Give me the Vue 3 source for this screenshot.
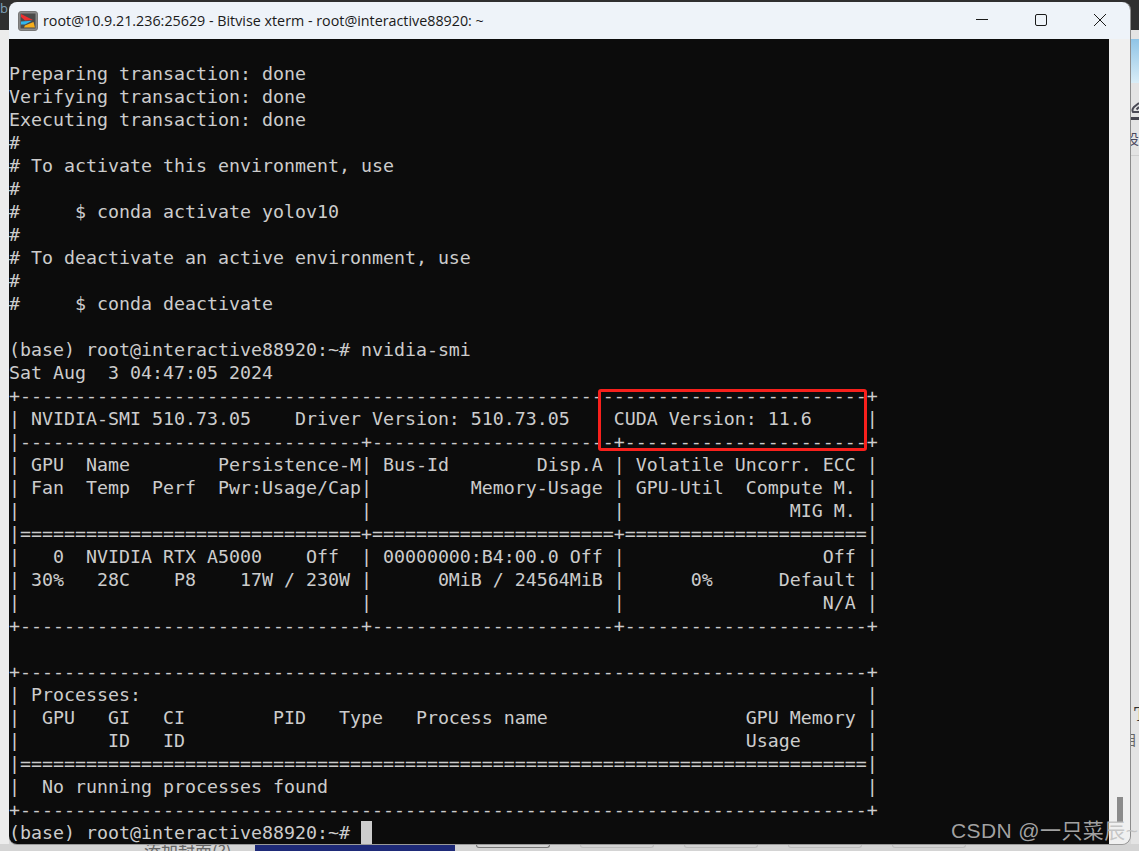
<script setup>
const lines = [
  '',
  'Preparing transaction: done',
  'Verifying transaction: done',
  'Executing transaction: done',
  '#',
  '# To activate this environment, use',
  '#',
  '#     $ conda activate yolov10',
  '#',
  '# To deactivate an active environment, use',
  '#',
  '#     $ conda deactivate',
  '',
  '(base) root@interactive88920:~# nvidia-smi',
  'Sat Aug  3 04:47:05 2024',
  '+-----------------------------------------------------------------------------+',
  '| NVIDIA-SMI 510.73.05    Driver Version: 510.73.05    CUDA Version: 11.6     |',
  '|-------------------------------+----------------------+----------------------+',
  '| GPU  Name        Persistence-M| Bus-Id        Disp.A | Volatile Uncorr. ECC |',
  '| Fan  Temp  Perf  Pwr:Usage/Cap|         Memory-Usage | GPU-Util  Compute M. |',
  '|                               |                      |               MIG M. |',
  '|===============================+======================+======================|',
  '|   0  NVIDIA RTX A5000    Off  | 00000000:B4:00.0 Off |                  Off |',
  '| 30%   28C    P8    17W / 230W |      0MiB / 24564MiB |      0%      Default |',
  '|                               |                      |                  N/A |',
  '+-------------------------------+----------------------+----------------------+',
  '',
  '+-----------------------------------------------------------------------------+',
  '| Processes:                                                                  |',
  '|  GPU   GI   CI        PID   Type   Process name                  GPU Memory |',
  '|        ID   ID                                                   Usage      |',
  '|=============================================================================|',
  '|  No running processes found                                                 |',
  '+-----------------------------------------------------------------------------+',
]
const prompt = '(base) root@interactive88920:~# '
</script>

<template>
  <div class="desktop">
    <div class="back-top"><span class="bt-glyph">b</span></div>
    <div class="back-left"></div>
    <div class="back-right">
      <div class="br-image"></div>
      <svg class="br-icon" width="8" height="12" viewBox="0 0 8 12">
        <path d="M8 1 L3 5 Q0.5 7.5 2 10 L8 10 M8 5 L5.5 7.5" stroke="#4a4a55" stroke-width="2" fill="none" />
      </svg>
      <div class="br-rule"></div>
      <span class="br-text">设置</span>
      <div class="br-line"></div>
      <span class="br-t">T</span>
      <span class="br-m">目</span>
    </div>
    <div class="back-bottom">
      <span class="bb-text">添加封面(?)</span>
      <div class="bb-blue"></div>
      <div class="bb-btn bb-dark"></div>
      <div class="bb-btn"></div>
      <div class="bb-btn"></div>
      <div class="bb-btn"></div>
      <div class="bb-btn"></div>
    </div>

    <div class="window">
      <header class="titlebar">
        <svg class="app-icon" width="20" height="20" viewBox="0 0 20 20">
          <rect x="0.5" y="0.5" width="19" height="19" rx="2.5" fill="#8a8a8a" stroke="#777" />
          <rect x="2.5" y="2.5" width="15" height="15" fill="#4a4a4a" />
          <path d="M3 3 L15 9 L7 9.6 L3 6 Z" fill="#ee2f2f" />
          <path d="M3 10.5 L14 9.8 L7 13.6 L3 13.6 Z" fill="#2fb6ee" />
          <path d="M7 14.6 L15.5 11 L17 16.4 L6 16.4 Z" fill="#f6ae1a" />
        </svg>
        <span class="title">root@10.9.21.236:25629 - Bitvise xterm - root@interactive88920: ~</span>
        <div class="controls">
          <svg class="ctl" width="14" height="14" viewBox="0 0 14 14"><path d="M1 6.5 H13" stroke="#1a1a1a" fill="none" /></svg>
          <svg class="ctl" width="14" height="14" viewBox="0 0 14 14"><rect x="1.5" y="1.5" width="11" height="11" rx="1.5" stroke="#1a1a1a" fill="none" /></svg>
          <svg class="ctl" width="14" height="14" viewBox="0 0 14 14"><path d="M1 1 L13 13 M13 1 L1 13" stroke="#1a1a1a" fill="none" /></svg>
        </div>
      </header>
      <div class="body">
        <div class="term">
          <div v-for="(l, i) in lines" :key="i" class="line">{{ l }}</div>
          <div class="line">{{ prompt }}<span class="cursor"></span></div>
          <div class="highlight"></div>
        </div>
        <div class="scrollbar">
          <div class="thumb"></div>
        </div>
      </div>
    </div>

    <div class="watermark">CSDN @一只菜辰~</div>
  </div>
</template>

<style scoped>
.desktop {
  position: relative;
  width: 1139px;
  height: 851px;
  overflow: hidden;
  background: #d8d8d8;
  font-family: "Open Sans", "Noto Sans", sans-serif;
}
.back-top {
  position: absolute;
  left: 0;
  top: 0;
  width: 1139px;
  height: 30px;
  background: #2f2f2f;
  overflow: hidden;
}
.bt-glyph {
  position: absolute;
  left: 0;
  top: 0;
  font-size: 13px;
  line-height: 16px;
  color: #7fa0b8;
}
.back-left {
  position: absolute;
  left: 0;
  top: 30px;
  width: 9px;
  height: 821px;
  background: #ececec;
}
.back-right {
  position: absolute;
  left: 1131px;
  top: 30px;
  width: 8px;
  height: 821px;
  background: #e4e4e4;
  overflow: hidden;
}
.br-image {
  height: 44px;
  margin-top: 9px;
  background: linear-gradient(#8fc4e6, #d9edf7);
}
.br-icon {
  display: block;
  margin-top: 19px;
}
.br-rule {
  height: 3px;
  margin-top: 3px;
  background: #44444e;
}
.br-text {
  position: absolute;
  left: -6px;
  top: 99px;
  font-family: "Noto Sans CJK SC", sans-serif;
  font-size: 14px;
  line-height: 18px;
  color: #4a4a60;
  white-space: nowrap;
}
.br-line {
  position: absolute;
  left: 0;
  top: 125px;
  width: 8px;
  height: 1px;
  background: #cfcfcf;
}
.br-t {
  position: absolute;
  left: 3px;
  top: 672px;
  font-family: "Liberation Serif", serif;
  font-size: 20px;
  line-height: 24px;
  font-weight: bold;
  color: #333;
}
.br-m {
  position: absolute;
  left: -8px;
  top: 700px;
  font-family: "Noto Sans CJK SC", sans-serif;
  font-size: 14px;
  line-height: 18px;
  color: #666;
}
.back-bottom {
  position: absolute;
  left: 0;
  top: 844px;
  width: 1139px;
  height: 7px;
  background: #d4d4d4;
  overflow: hidden;
  display: flex;
  gap: 30px;
  padding-left: 476px;
  box-sizing: border-box;
}
.bb-text {
  position: absolute;
  left: 144px;
  top: -3px;
  font-size: 17px;
  line-height: 20px;
  color: #666;
  font-family: "Noto Sans CJK SC", sans-serif;
  white-space: nowrap;
}
.bb-blue {
  position: absolute;
  left: 255px;
  top: 0;
  width: 200px;
  height: 7px;
  background: #1e2a78;
}
.bb-btn {
  flex: none;
  width: 74px;
  height: 4px;
  box-sizing: border-box;
  border: 1px solid #bdbdbd;
  border-top: 0;
  border-radius: 0 0 3px 3px;
}
.bb-dark {
  border-color: #777;
}
.window {
  position: absolute;
  left: 9px;
  top: 2px;
  width: 1121px;
  height: 842px;
  display: flex;
  flex-direction: column;
  border-radius: 8px;
  overflow: hidden;
  box-shadow: 1px 0 0 #8c8c8c, 0 1px 0 #9a9a9a;
}
.titlebar {
  flex: none;
  height: 37px;
  display: flex;
  align-items: center;
  background: #eef3f9;
  padding-left: 9px;
}
.app-icon {
  flex: none;
  margin-right: 5px;
}
.title {
  font-size: 14.3px;
  color: #1a1a1a;
  white-space: nowrap;
}
.controls {
  margin-left: auto;
  margin-top: -1px;
  display: flex;
  align-items: center;
  gap: 45px;
  padding-right: 23px;
}
.ctl {
  display: block;
}
.body {
  flex: 1;
  display: flex;
  min-height: 0;
}
.term {
  position: relative;
  width: 1100px;
  background: #0c0c0c;
  color: #cccccc;
  font-family: "DejaVu Sans Mono", monospace;
  font-size: 18.27px;
  overflow: hidden;
}
.line {
  height: 23px;
  line-height: 23px;
  white-space: pre;
}
.cursor {
  display: inline-block;
  width: 11px;
  height: 23px;
  vertical-align: top;
  background: #cccccc;
}
.highlight {
  position: absolute;
  left: 589px;
  top: 350px;
  width: 269px;
  height: 62px;
  box-sizing: border-box;
  border: 3px solid #f8201c;
  border-radius: 3px;
}
.scrollbar {
  position: relative;
  flex: none;
  width: 21px;
  background: #f0f0f0;
}
.thumb {
  position: absolute;
  left: 8px;
  top: 758px;
  width: 6px;
  height: 25px;
  background: #8b8b8b;
}
.watermark {
  position: absolute;
  left: 951px;
  top: 817px;
  font-family: "Liberation Sans", "Noto Sans CJK SC", sans-serif;
  font-size: 21px;
  letter-spacing: 0.4px;
  line-height: 28px;
  color: rgba(190, 190, 190, 0.85);
  white-space: nowrap;
}
</style>
